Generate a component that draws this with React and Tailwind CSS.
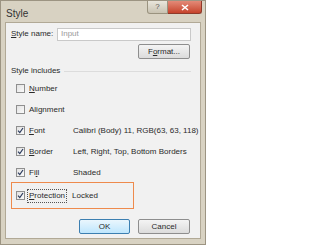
import React from "react";

function Check({ checked }) {
  return (
    <div className="w-[9px] h-[9px] border border-[#8f8f8f] bg-gradient-to-br from-[#e2e2e2] to-[#fafafa] flex items-center justify-center shrink-0">
      {checked && (
        <svg width="7" height="7" viewBox="0 0 7 7">
          <path d="M1 3.6 L2.8 5.6 L6 1" fill="none" stroke="#2c3b5e" strokeWidth="1.2" />
        </svg>
      )}
    </div>
  );
}

function Row({ label, ul, rest, value, checked }) {
  return (
    <div className="flex items-center h-[21px] whitespace-nowrap">
      <Check checked={checked} />
      <span className="ml-[4px] w-[44px] shrink-0">
        {label}<span className="underline">{ul}</span>{rest}
      </span>
      <span>{value}</span>
    </div>
  );
}

export default function App() {
  return (
    <div
      className="w-[206px] h-[245px] bg-[#d8d2c2] border border-[#9c9482] flex flex-col text-[8px] text-[#2a2a2a] overflow-hidden whitespace-nowrap"
      style={{ fontFamily: '"Liberation Sans", Arial, sans-serif' }}
    >
      {/* title bar */}
      <div className="h-[21px] flex items-start justify-between shrink-0">
        <span className="text-[10px] text-[#333] ml-[5px] mt-[5px]">Style</span>
        <div className="flex mr-[3px]">
          <div className="w-[21px] h-[13px] bg-gradient-to-b from-[#e9e6dc] to-[#c9c3b2] border border-[#9a937f] border-t-0 rounded-bl-[3px] flex items-center justify-center text-[8px] text-[#555]">?</div>
          <div className="w-[34px] h-[13px] bg-gradient-to-b from-[#e38a78] to-[#c6422a] border border-[#8e3a2a] border-t-0 border-l-0 rounded-br-[3px] flex items-center justify-center">
            <svg width="8" height="7" viewBox="0 0 8 7">
              <path d="M1 1 L7 6 M7 1 L1 6" stroke="#fff" strokeWidth="1.6" />
            </svg>
          </div>
        </div>
      </div>
      {/* client area */}
      <div className="mx-[4px] mb-[5px] flex-1 bg-[#f1f1f1] border border-[#b1a996] flex flex-col px-[5px]">
        <div className="flex items-center mt-[4px] h-[14px]">
          <span className="w-[46px]"><span className="underline">S</span>tyle name:</span>
          <div className="flex-1 h-[13px] bg-white border border-[#c9c9c9] flex items-center pl-[3px] text-[#9a9a9a] mr-[4px]">Input</div>
        </div>
        <div className="flex justify-end mt-[3px] mr-[5px]">
          <div className="w-[52px] h-[15px] border border-[#8e8e8e] rounded-[2px] bg-gradient-to-b from-[#f4f4f4] to-[#dcdcdc] flex items-center justify-center">
            F<span className="underline">o</span>rmat...
          </div>
        </div>
        <div className="flex items-center mt-[6px] h-[12px]">
          <span>Style includes</span>
          <div className="flex-1 h-px bg-[#dcdcdc] ml-[4px] mr-[4px]" />
        </div>
        <div className="ml-[5px] mt-[1px] flex flex-col">
          <Row label="" ul="N" rest="umber" value="" />
          <Row label="Ali" ul="g" rest="nment" value="" />
          <Row label="" ul="F" rest="ont" value="Calibri (Body) 11, RGB(63, 63, 118)" checked />
          <Row label="" ul="B" rest="order" value="Left, Right, Top, Bottom Borders" checked />
          <Row label="Fi" ul="l" rest="l" value="Shaded" checked />
        </div>
        <div className="mt-[-1px] w-[123px] h-[27px] border-[1.5px] border-[#ee8a4c] flex items-center pl-[4px]">
          <Check checked />
          <span className="ml-[2px] px-[1px] border border-dotted border-[#555]"><span className="underline">P</span>rotection</span>
          <span className="ml-[5px]">Locked</span>
        </div>
        <div className="flex justify-end gap-[8px] mt-[10px] mr-[5px]">
          <div className="w-[51px] h-[15px] border border-[#3c7fb1] rounded-[2px] bg-gradient-to-b from-[#eaf6fd] to-[#bee6fd] flex items-center justify-center">OK</div>
          <div className="w-[52px] h-[15px] border border-[#8e8e8e] rounded-[2px] bg-gradient-to-b from-[#f4f4f4] to-[#dcdcdc] flex items-center justify-center">Cancel</div>
        </div>
      </div>
    </div>
  );
}
